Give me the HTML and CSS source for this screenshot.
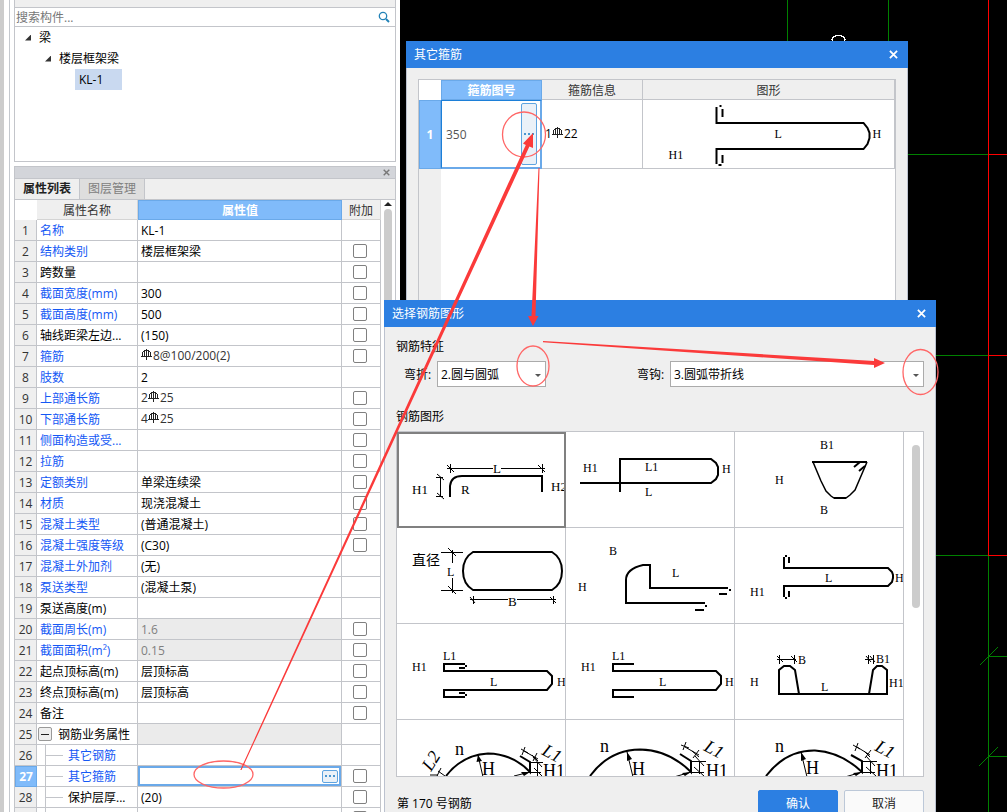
FILE: index.html
```html
<!DOCTYPE html>
<html lang="zh-CN">
<head>
<meta charset="utf-8">
<title>属性列表</title>
<link rel="stylesheet" href="styles.css">
</head>
<body>
<svg class="defs" aria-hidden="true">
  <symbol id="rebar" viewBox="0 0 11 12"><path d="M5.500 0V11M3.500 1.500H7.500M1.500 3V7M9.500 3V7M3.500 2V8M7.500 2V8M0 7.500H11M2 3L3.500 1.500M9 3L7.500 1.500" fill="none" stroke="#222" stroke-width="1"/></symbol>
  <symbol id="close" viewBox="0 0 10 10"><path d="M1 1L9 9M9 1L1 9" fill="none" stroke="currentColor" stroke-width="2"/></symbol>
</svg>
<div class="desktop">
  <aside class="dock">
    <div class="rail"></div>
    <div class="dock-main">
      <section class="components">
        <div class="toolbar"></div>
        <label class="search">
          <input type="text" placeholder="搜索构件..." aria-label="搜索构件">
          <svg width="12" height="12" viewBox="0 0 12 12"><circle cx="5" cy="5" r="3.700" fill="none" stroke="#2383b8" stroke-width="1.300"/><path d="M8 8L11 11" stroke="#2383b8" stroke-width="2"/></svg>
        </label>
        <ul class="tree">
          <li class="lv1"><i class="twist"></i>梁</li>
          <li class="lv2"><i class="twist"></i>楼层框架梁</li>
          <li class="lv3"><span>KL-1</span></li>
        </ul>
      </section>
      <section class="props">
        <header class="dock-title"><button type="button" aria-label="关闭"><svg width="7" height="7"><use href="#close"/></svg></button></header>
        <nav class="tabs"><button type="button" class="tab on">属性列表</button><button type="button" class="tab">图层管理</button></nav>
        <div class="grid-wrap">
          <table class="grid">
            <colgroup><col class="c-no"><col class="c-name"><col class="c-val"><col class="c-add"></colgroup>
            <thead><tr><th></th><th>属性名称</th><th class="hot">属性值</th><th>附加</th></tr></thead>
            <tbody>
            <tr><th>1</th><td class="key">名称</td><td>KL-1</td><td></td></tr>
            <tr><th>2</th><td class="key">结构类别</td><td>楼层框架梁</td><td><input type="checkbox" aria-label="结构类别"></td></tr>
            <tr><th>3</th><td>跨数量</td><td></td><td><input type="checkbox" aria-label="跨数量"></td></tr>
            <tr><th>4</th><td class="key">截面宽度(mm)</td><td>300</td><td><input type="checkbox" aria-label="截面宽度"></td></tr>
            <tr><th>5</th><td class="key">截面高度(mm)</td><td>500</td><td><input type="checkbox" aria-label="截面高度"></td></tr>
            <tr><th>6</th><td>轴线距梁左边...</td><td>(150)</td><td><input type="checkbox" aria-label="轴线距梁左边"></td></tr>
            <tr><th>7</th><td class="key">箍筋</td><td class="soft"><svg class="rebar"><use href="#rebar"/></svg>8@100/200(2)</td><td><input type="checkbox" aria-label="箍筋"></td></tr>
            <tr><th>8</th><td class="key">肢数</td><td>2</td><td></td></tr>
            <tr><th>9</th><td class="key">上部通长筋</td><td class="soft">2<svg class="rebar"><use href="#rebar"/></svg>25</td><td><input type="checkbox" aria-label="上部通长筋"></td></tr>
            <tr><th>10</th><td class="key">下部通长筋</td><td class="soft">4<svg class="rebar"><use href="#rebar"/></svg>25</td><td><input type="checkbox" aria-label="下部通长筋"></td></tr>
            <tr><th>11</th><td class="key">侧面构造或受...</td><td></td><td><input type="checkbox" aria-label="侧面构造"></td></tr>
            <tr><th>12</th><td class="key">拉筋</td><td></td><td><input type="checkbox" aria-label="拉筋"></td></tr>
            <tr><th>13</th><td class="key">定额类别</td><td>单梁连续梁</td><td><input type="checkbox" aria-label="定额类别"></td></tr>
            <tr><th>14</th><td class="key">材质</td><td>现浇混凝土</td><td><input type="checkbox" aria-label="材质"></td></tr>
            <tr><th>15</th><td class="key">混凝土类型</td><td>(普通混凝土)</td><td><input type="checkbox" aria-label="混凝土类型"></td></tr>
            <tr><th>16</th><td class="key">混凝土强度等级</td><td>(C30)</td><td><input type="checkbox" aria-label="混凝土强度等级"></td></tr>
            <tr><th>17</th><td class="key">混凝土外加剂</td><td>(无)</td><td></td></tr>
            <tr><th>18</th><td class="key">泵送类型</td><td>(混凝土泵)</td><td></td></tr>
            <tr><th>19</th><td>泵送高度(m)</td><td></td><td></td></tr>
            <tr><th>20</th><td class="key">截面周长(m)</td><td class="off">1.6</td><td><input type="checkbox" aria-label="截面周长"></td></tr>
            <tr><th>21</th><td class="key">截面面积(m²)</td><td class="off">0.15</td><td><input type="checkbox" aria-label="截面面积"></td></tr>
            <tr><th>22</th><td>起点顶标高(m)</td><td>层顶标高</td><td><input type="checkbox" aria-label="起点顶标高"></td></tr>
            <tr><th>23</th><td>终点顶标高(m)</td><td>层顶标高</td><td><input type="checkbox" aria-label="终点顶标高"></td></tr>
            <tr><th>24</th><td>备注</td><td></td><td><input type="checkbox" aria-label="备注"></td></tr>
            <tr><th>25</th><td class="group"><div class="cell"><button type="button" class="fold" aria-label="折叠"></button><span>钢筋业务属性</span></div></td><td class="off"></td><td></td></tr>
            <tr><th>26</th><td class="key child"><div class="cell"><i class="branch"></i><span>其它钢筋</span></div></td><td></td><td></td></tr>
            <tr><th class="now">27</th><td class="key child"><div class="cell"><i class="branch"></i><span>其它箍筋</span></div></td><td class="edit"><div class="cell"><input type="text" aria-label="其它箍筋值"><button type="button" class="more" aria-label="更多"><i></i><i></i><i></i></button></div></td><td><input type="checkbox" aria-label="其它箍筋"></td></tr>
            <tr><th>28</th><td class="child"><div class="cell"><i class="branch"></i><span>保护层厚...</span></div></td><td>(20)</td><td><input type="checkbox" aria-label="保护层厚"></td></tr>
            <tr><th></th><td class="child"><div class="cell"><i class="branch"></i></div></td><td></td><td><input type="checkbox" aria-label="其它"></td></tr>
            </tbody>
          </table>
          <div class="vbar"><i class="up"></i><i class="thumb"></i></div>
        </div>
      </section>
    </div>
  </aside>
  <main class="cad">
    <svg width="607" height="812" viewBox="400 0 607 812" shape-rendering="crispEdges" fill="none">
      <g stroke="#008000"><path d="M787.500 0V60M888.500 0V60M900 154.500H988M930 355.500H988M930 555.500H988M988.500 555V812M988 656.500H1007M980 665L998 647M988 756.500H1007M979 766L998 747"/></g>
      <path d="M988.500 0V555M988 154.500H1007M988 355.500H1007M988 555.500H1007" stroke="#f00"/>
      <ellipse cx="838.500" cy="39.500" rx="6.500" ry="4" stroke="#fff" stroke-width="1.500"/>
    </svg>
  </main>

  <section class="dialog stirrup" role="dialog" aria-label="其它箍筋">
    <header class="titlebar"><span>其它箍筋</span><button type="button" aria-label="关闭"><svg width="9" height="9"><use href="#close"/></svg></button></header>
    <div class="stirrup-body">
      <div class="sheet">
        <table>
          <colgroup><col class="s-no"><col class="s-id"><col class="s-info"><col></colgroup>
          <thead><tr><th></th><th class="hot">箍筋图号</th><th>箍筋信息</th><th>图形</th></tr></thead>
          <tbody><tr>
            <th class="now">1</th>
            <td class="picked"><div class="cell"><input type="text" value="350" aria-label="箍筋图号"><button type="button" class="more tall" aria-label="选择图号"><i></i><i></i><i></i></button></div></td>
            <td class="info">1<svg class="rebar"><use href="#rebar"/></svg>22</td>
            <td class="pic"><svg class="draw" width="250" height="66" viewBox="643 101 250 66">
              <path class="bar" d="M716 107V123H863L867 128L869 133V138L867 144L863 149H716V164M722 109V117M722 155V163M719 106H721M718 165H721"/>
              <text x="774" y="138">L</text><text x="872" y="138">H</text><text x="668" y="159">H1</text>
            </svg></td>
          </tr></tbody>
        </table>
      </div>
    </div>
  </section>

  <section class="dialog picker" role="dialog" aria-label="选择钢筋图形">
    <header class="titlebar"><span>选择钢筋图形</span><button type="button" aria-label="关闭"><svg width="9" height="9"><use href="#close"/></svg></button></header>
    <div class="picker-body">
      <h2>钢筋特征</h2>
      <div class="filters">
        <label for="bend">弯折:</label><span class="drop bend"><select id="bend"><option>2.圆与圆弧</option></select></span>
        <label for="hook" class="second">弯钩:</label><span class="drop hook"><select id="hook"><option>3.圆弧带折线</option></select></span>
      </div>
      <h2 class="shapes-title">钢筋图形</h2>
      <div class="shapes">
        <div class="cards">
          <button type="button" class="card sel"><svg class="draw" viewBox="397 432 168 95">
            <path class="bar" d="M450 497V486Q451 476 462 476H542V492"/>
            <path class="dim" d="M450 468.500H493M501 468.500H542M440.500 477V497"/>
            <path class="dim" d="M450.500 464V473M447 465L454 472M447 468.500H450M542.500 464V473M538 465L545 472M542 468.500H545M437 474L444 480M436 477.500H443M437 493L444 499M436 496.500H443"/>
            <g class="big"><text x="493" y="473">L</text><text x="412" y="494">H1</text><text x="461" y="494">R</text><text x="551" y="491">H2</text></g></svg></button>
          <button type="button" class="card"><svg class="draw" viewBox="566 432 168 95">
            <path class="bar" d="M580 483H711L716 479L718 475V467L716 463L711 459H620V492"/>
            <text x="583" y="472">H1</text><text x="645" y="471">L1</text><text x="645" y="496">L</text><text x="722" y="473">H</text></svg></button>
          <button type="button" class="card"><svg class="draw" viewBox="735 432 168 95">
            <path class="bar" d="M812 462H867M854 467L860 462M859 471L865 466M834 498H846"/><path class="thin" d="M813 462L821 481L826 491L831 496L834 498H846L850 495L855 490L867 462"/>
            <text x="820" y="449">B1</text><text x="820" y="514">B</text><text x="775" y="484">H</text></svg></button>
          <button type="button" class="card"><svg class="draw" viewBox="397 528 168 95">
            <path class="bar" d="M473 552H552Q562 558 562 571T552 590H473Q463 584 463 571T473 552Z"/>
            <path class="dim" d="M441 552.500H463M441 590.500H463M452.500 550V563M452.500 578V593M448 548L456 556M448 586L456 594M470 599.500H508M517 599.500H556M473.500 596V604M470 597L475 603M553.500 596V604M550 597L556 603"/>
            <text class="cjk" x="412" y="565">直径</text><text x="447" y="576">L</text><text class="bigger" x="508" y="606">B</text></svg></button>
          <button type="button" class="card"><svg class="draw" viewBox="566 528 168 95">
            <path class="bar" d="M728 588H650V565H643Q626 569 626 580V603H705M719 594H727M729 590H731M695 610H704M705 606H707"/>
            <text x="609" y="555">B</text><text x="578" y="591">H</text><text x="672" y="577">L</text></svg></button>
          <button type="button" class="card"><svg class="draw" viewBox="735 528 168 95">
            <path class="bar" d="M784 557V568H888L892 572L893 575V578L892 582L888 586H784V597M789 557V563M789 591V597M785 556H787M785 598H787"/>
            <text x="825" y="582">L</text><text x="750" y="596">H1</text><text x="895" y="582">H</text></svg></button>
          <button type="button" class="card"><svg class="draw" viewBox="397 624 168 95">
            <path class="bar" d="M465 664H444V671H547L552 676V684L547 690H444V697H465M459 668H465M465 666H467M459 693H465M465 695H467"/>
            <text x="443" y="660">L1</text><text x="412" y="671">H1</text><text x="490" y="686">L</text><text x="557" y="686">H</text></svg></button>
          <button type="button" class="card"><svg class="draw" viewBox="566 624 168 95">
            <path class="bar" d="M634 664H613V671H716L721 676V684L716 690H613V697H634"/>
            <text x="612" y="660">L1</text><text x="581" y="671">H1</text><text x="659" y="686">L</text><text x="725" y="686">H</text></svg></button>
          <button type="button" class="card"><svg class="draw" viewBox="735 624 168 95">
            <path class="bar" d="M799 694L795 670L790 666H784L779 670V694H887V670L882 666H877L873 670L869 694"/>
            <path class="dim" d="M777 659.500H796M779.500 655V664M777 656L783 662M794.500 655V664M791 656L797 662M865 659.500H874M868.500 655V664M866 656L871 662M873.500 655V664M870 656L875 662"/>
            <text x="798" y="664">B</text><text x="876" y="663">B1</text><text x="750" y="686">H</text><text x="889" y="687">H1</text><text x="821" y="691">L</text></svg></button>
          <button type="button" class="card"><svg class="draw" viewBox="397 720 168 95">
            <path class="arc" d="M446 776Q462 755 488 753.500Q513 754 530 772V762L520 756"/>
            <path class="dim" d="M478 755L483 777M524 751L538 759M521 749L528 753M525 747L522 755M532 755L538 761M537 753L533 761M530 762.500H543M530 772.500H541M537.500 762V776M533 757L542 767M534 768L543 777M514 776L530 772M438 771L445 776M441 768L437 776M430 775H438"/><path d="M478 755L476.500 762L482 761ZM530 772L521 772L524 776Z"/>
            <g class="huge"><text x="455" y="755">n</text><text x="482" y="775">H</text><text x="543" y="777">H1</text></g>
            <text class="slant" transform="translate(541 754) rotate(28)">L1</text><text class="slant" transform="translate(431 772) rotate(-58)">L2</text></svg></button>
          <button type="button" class="card"><svg class="draw" viewBox="566 720 168 95">
            <path class="arc" d="M590 776Q609 750 640 749.500Q669 750 691 772V761L680 754"/>
            <path class="dim" d="M627 752L633 777M685 747L699 755M681 745L689 748M686 742L683 750M692 751L699 757M699 750L693 758M691 761.500H706M691 772.500H704M699.500 761V774M695 756L704 766M694 767L704 776M674 777L691 772"/><path d="M627 752L627 761L632 759ZM691 772L682 773L685 776Z"/>
            <g class="huge"><text x="600" y="752">n</text><text x="632" y="775">H</text><text x="706" y="777">H1</text></g>
            <text class="slant" transform="translate(703 750) rotate(28)">L1</text></svg></button>
          <button type="button" class="card"><svg class="draw" viewBox="735 720 168 95">
            <path class="arc" d="M766 776Q786 750 815 750.500Q841 752 862 772V761L851 755"/>
            <path class="dim" d="M801 752L807 777M857 747L870 755M853 745L860 749M858 743L855 751M864 751L870 757M871 750L865 758M862 761.500H877M862 772.500H875M870.500 761V774M866 756L875 766M866 767L876 776M845 777L862 772"/><path d="M801 752L801 761L806 759ZM862 772L853 773L856 776Z"/>
            <g class="huge"><text x="775" y="752">n</text><text x="806" y="774">H</text><text x="876" y="777">H1</text></g>
            <text class="slant" transform="translate(874 750) rotate(28)">L1</text></svg></button>
        </div>
        <div class="shapes-bar"><i></i></div>
      </div>
      <footer><span>第 170 号钢筋</span><button type="button" class="ok">确认</button><button type="button" class="cancel">取消</button></footer>
    </div>
  </section>

  <svg class="marks" width="1007" height="812" viewBox="0 0 1007 812" aria-hidden="true">
    <g fill="none" stroke="#f66" stroke-width="1.300"><ellipse cx="223.500" cy="774.500" rx="29.500" ry="13.500"/><ellipse cx="524" cy="134.500" rx="21.500" ry="22.500"/><ellipse cx="533" cy="366" rx="16" ry="20"/><ellipse cx="920.500" cy="372" rx="17.500" ry="22.500"/></g>
    <g fill="#fb3a3a"><path d="M240.300 770L525.800 145L523 143.500L533 133L533 148L529.400 146.600L241.500 770Z"/><path d="M538.500 168H539.500L535.500 316H538.500L533 326L528 316H531.500Z"/><path d="M543 341L874 361L874 358L885 363L874 368V365L543 342.200Z"/></g>
  </svg>
</div>
</body>
</html>
```
FILE: styles.css
```css
* { box-sizing: border-box; }
body { margin: 0; overflow: hidden; color: #000; font: 12px/18px "Open Sans", "Noto Sans CJK SC", sans-serif; }
button, input, select { margin: 0; padding: 0; border: 0; background: none; color: inherit; font: inherit; }
.defs { display: block; width: 0; height: 0; }
.desktop { position: relative; display: flex; height: 100vh; min-height: 600px; overflow: hidden; background: #000; }

/* left dock */
.dock { flex: 0 0 400px; display: flex; background: #fff; }
.rail { width: 10px; margin-right: 4px; border-left: 4px solid #ccc; border-right: 1px solid #c4c8ce; }
.dock-main { flex: 1; display: flex; flex-direction: column; margin-right: 4px; min-width: 0; }
.components { height: 162px; border: solid #c3c5ca; border-width: 0 1px 1px; }
.toolbar { height: 8px; background: #efefef; border-bottom: 1px solid #c3c5ca; }
.search { display: flex; align-items: center; height: 19px; padding: 0 5px 0 1px; border-bottom: 1px solid #c3c5ca; }
.search input { flex: 1; height: 18px; padding-top: 1px; outline: 0; }
.search input::placeholder { color: #777; opacity: 1; }
.tree { margin: 0; padding: 0; list-style: none; line-height: 21px; }
.tree li { display: flex; align-items: center; height: 21px; }
.lv1 { padding-left: 10px; }
.lv2 { padding-left: 30px; }
.lv3 { padding-left: 60px; }
.lv3 span { width: 47px; padding-left: 4px; background: #c9d9f0; }
.twist { width: 6px; height: 6px; margin-right: 8px; background: #333; clip-path: polygon(100% 0, 100% 100%, 0 100%); }

.props { flex: 1; min-height: 0; display: flex; flex-direction: column; margin-top: 4px; border: 1px solid #c3c5ca; border-bottom: 0; }
.dock-title { display: flex; flex: none; justify-content: flex-end; align-items: center; height: 11px; padding-right: 5px; background: #d3d5da; color: #777; }
.dock-title button { display: flex; }
.tabs { display: flex; flex: none; height: 22px; background: #efefef; border: solid #c3c5ca; border-width: 1px 0; }
.tab { width: 65px; border-right: 1px solid #c3c5ca; color: #222; }
.tab.on { font-weight: bold; }
.tab:not(.on) { background: #dedede; color: #808080; }
.grid-wrap { flex: 1; min-height: 0; display: flex; overflow: hidden; }
table { table-layout: fixed; border-collapse: separate; border-spacing: 0; }
th { font-weight: normal; color: #333; background: #efefef; }
.grid { flex: 1; width: 366px; align-self: flex-start; }
.c-no { width: 22px; }
.c-name { width: 101px; }
.c-val { width: 204px; }
.c-add { width: 39px; }
.grid th, .grid td { height: 21px; padding: 2px 0 0; border: solid #c3c5ca; border-width: 0 1px 1px 0; line-height: 18px; white-space: nowrap; overflow: hidden; }
.grid thead th { height: 20px; padding-top: 1px; border-color: #d4d4d4; line-height: 17px; }
.grid thead th:first-child, .sheet thead th:first-child { background: #fff; border-color: #fff; }
.grid thead .hot, .sheet thead .hot { background: #80bbfa; border: 1px solid #6aa9e9; color: #fff; font-weight: bold; }
.grid .now, .sheet .now { background: #80bbfa; border: 1px solid #6aa9e9; color: #fff; font-weight: bold; }
.grid .now { padding-top: 1px; }
.grid td:nth-child(2), .grid td:nth-child(3) { padding-left: 3px; }
.grid td:nth-child(4) { padding: 0 2px 0 0; }
.key { color: #1458f5; }
.grid tbody td.soft { padding-top: 0; color: #333; }
.grid .off { background: #ebebeb; color: #808080; }
.grid input[type=checkbox] { appearance: none; display: block; width: 14px; height: 14px; margin: 0 auto; border: 1px solid #808080; border-radius: 2px; background: #fff; }
.cell { display: flex; align-items: center; height: 20px; }
.cell span { padding-top: 2px; }
.grid tbody td.group { padding: 0 0 0 1px; }
.fold { display: flex; align-items: center; justify-content: center; width: 14px; height: 14px; margin-right: 6px; border: 1px solid #999; border-radius: 2px; background: #efefef; }
.fold::before { content: ""; width: 8px; height: 1px; background: #222; }
.grid tbody td.child { padding: 0 0 0 8px; }
.branch { width: 18px; height: 20px; margin-right: 5px; border-left: 1px solid #c3c5ca; background: linear-gradient(#c3c5ca, #c3c5ca) 0 10px / 100% 1px no-repeat; }
.grid tbody td.edit { padding: 0; }
.edit .cell { border: 2px solid #6aa9e9; padding-right: 1px; }
.edit input { flex: 1; min-width: 0; height: 16px; outline: 0; }
.more { display: flex; align-items: center; justify-content: center; gap: 2px; width: 16px; height: 13px; border: 1px solid #5ea4e0; border-radius: 2px; background: #eaf1f8; }
.more i { width: 2px; height: 2px; background: #4a96cf; }
.rebar { width: 11px; height: 12px; margin: 0 1px 0 0; vertical-align: -1px; shape-rendering: crispEdges; }
.vbar { width: 14px; display: flex; flex-direction: column; align-items: center; padding-top: 2px; background: #fff; }
.up { width: 8px; height: 4px; margin-bottom: 3px; background: #222; clip-path: polygon(50% 0, 100% 100%, 0 100%); }
.thumb { width: 8px; flex: 1; border-radius: 4px; background: #ccc; }

/* drawing area */
.cad { flex: 1; min-width: 0; overflow: hidden; background: #000; }
.cad svg { display: block; }

/* floating windows */
.dialog { position: absolute; background: #efefef; border: solid #bcc2cf; border-width: 0 1px; }
.titlebar { display: flex; align-items: center; justify-content: space-between; height: 27px; margin: 0 -1px; padding: 0 10px 0 8px; background: #2c7fe2; color: #fff; }
.titlebar button { display: flex; }
.stirrup { left: 406px; top: 41px; width: 502px; height: 300px; }
.stirrup-body { padding: 11px 11px 0; height: 273px; }
.sheet { height: 100%; border: 1px solid #c3c5ca; background: linear-gradient(90deg, #efefef 22px, #fff 22px); }
.sheet table { width: 100%; }
.s-no { width: 22px; }
.s-id { width: 101px; }
.s-info { width: 101px; }
.sheet th, .sheet td { padding: 0; border: solid #c3c5ca; border-width: 0 1px 1px 0; background-clip: padding-box; line-height: 18px; }
.sheet thead th { height: 20px; padding-top: 1px; line-height: 17px; }
.sheet td { height: 69px; background: #fff; }
.sheet .picked { border: solid #1c7fd8; border-width: 1px 2px 2px 1px; border-right-color: #6aa9e9; border-bottom-color: #6aa9e9; }
.picked .cell { height: 64px; padding: 0 3px 0 4px; }
.picked input { flex: 1; min-width: 0; padding-top: 2px; color: #555; }
.more.tall { height: 62px; }
.sheet .info { padding-left: 3px; }
.draw { display: block; width: 100%; font: 12px "Liberation Serif", serif; fill: #000; }
.draw .bar, .draw .arc { fill: none; stroke: #000; stroke-width: 2; }
.draw .thin, .draw .dim { fill: none; stroke: #000; stroke-width: 1; }
.draw .thin { stroke-width: 1.5; }
.draw .big, .draw .bigger { font-size: 13px; }
.draw .huge { font-size: 18px; }
.draw .slant { font-size: 18px; font-style: italic; }
.draw .cjk { font: 14px "Noto Sans CJK SC", sans-serif; }

.picker { left: 384px; top: 300px; width: 552px; height: 560px; }
.picker-body { padding: 11px 11px 0; }
h2 { margin: 0; font: inherit; }
.filters { display: flex; align-items: center; padding: 5px 0 0 8px; }
.filters label { width: 33px; padding-top: 2px; }
.filters .second { margin-left: 91px; }
.drop { position: relative; display: flex; border: 1px solid #ababab; background: #fff; }
.drop::after { content: ""; position: absolute; right: 4px; top: 12px; width: 6px; height: 3px; background: #555; clip-path: polygon(0 0, 100% 0, 50% 100%); }
.bend { width: 109px; }
.hook { flex: 1; }
.drop select { flex: 1; height: 24px; padding: 2px 3px 0; appearance: none; }
.shapes-title { margin-top: 21px; }
.shapes { display: flex; height: 346px; margin-top: 5px; border: 1px solid #c3c5ca; background: #fff; overflow: hidden; }
.cards { flex: 1; display: grid; grid-template-columns: repeat(3, 1fr); align-content: start; }
.card { height: 96px; border: solid #c3c5ca; border-width: 0 1px 1px 0; overflow: hidden; }
.card.sel { outline: 2px solid #808080; outline-offset: -2px; }
.shapes-bar { width: 19px; padding: 13px 2px 0 8px; }
.shapes-bar i { display: block; width: 8px; height: 163px; border-radius: 4px; background: #ccc; }
footer { display: flex; align-items: center; gap: 6px; margin-top: 13px; padding-left: 1px; }
footer span { flex: 1; }
.ok, .cancel { width: 80px; height: 28px; border: 1px solid #bcc8d8; border-radius: 2px; background: #fafafa; color: #222; }
.ok { border-color: #2c7fe2; background: #2c7fe2; color: #fff; }

.marks { position: absolute; left: 0; top: 0; pointer-events: none; }
```
